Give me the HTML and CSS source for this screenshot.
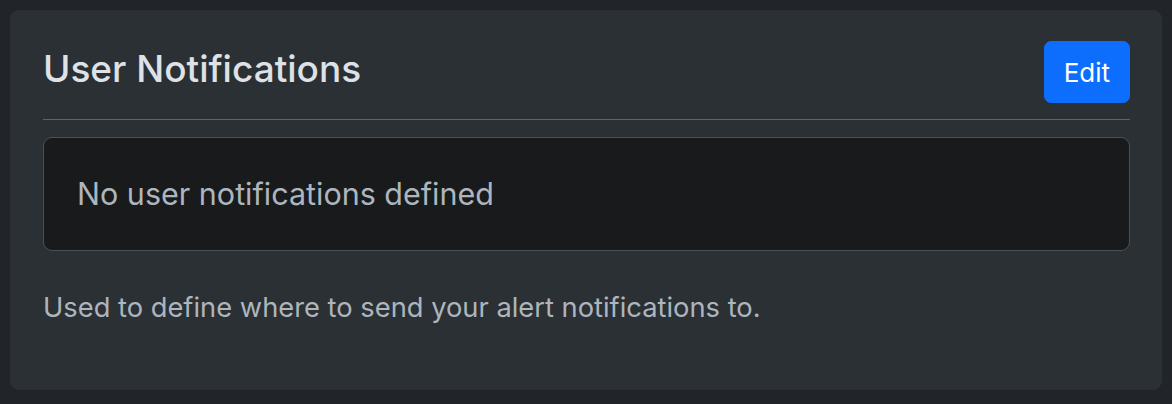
FILE: index.html
```html
<!DOCTYPE html>
<html lang="en">
<head>
  <meta charset="UTF-8">
  <meta name="viewport" content="width=device-width, initial-scale=1.0">
  <title>User Notifications</title>
  <link rel="stylesheet" href="styles.css">
</head>
<body>
  <div class="card">
    <div class="card-header">
      <h4>User Notifications</h4>
      <button type="button" class="btn-edit">Edit</button>
    </div>

    <div class="notify-list">
      <div class="notify-empty">No user notifications defined</div>
    </div>

    <p class="help-text">Used to define where to send your alert notifications to.</p>
  </div>
</body>
</html>
```

FILE: styles.css
```css
/* dark card styles */
body {
  margin: 0;
  padding: 10px;
  background: #212529;
  font-family: Inter, "Noto Sans", sans-serif;
}

.card {
  background: #2b3035;
  border-radius: 9px;
  height: 380px;
  box-sizing: border-box;
  padding: 31px 32px 0 33px;
}

.card-header {
  display: flex;
  justify-content: space-between;
  align-items: baseline;
  padding-bottom: 16px;
  border-bottom: 1px solid #5c636a;
}

.card-header h4 {
  margin: 0;
  font-size: 37px;
  font-weight: 500;
  color: #dee2e6;
}

.btn-edit {
  background: #0d6efd;
  color: #fff;
  border: 1px solid #0d6efd;
  border-radius: 7px;
  height: 62px;
  padding: 0 19px;
  font-family: inherit;
  font-size: 26px;
  cursor: pointer;
}

.notify-list {
  margin-top: 17px;
  background: #181a1c;
  border: 1px solid #495057;
  border-radius: 9px;
}

.notify-empty {
  padding: 31px 33px;
  line-height: 50px;
  font-size: 30.5px;
  color: #adb5bd;
}

.help-text {
  margin: 40px 0 0;
  font-size: 27.3px;
  color: #adb5bd;
}
```
